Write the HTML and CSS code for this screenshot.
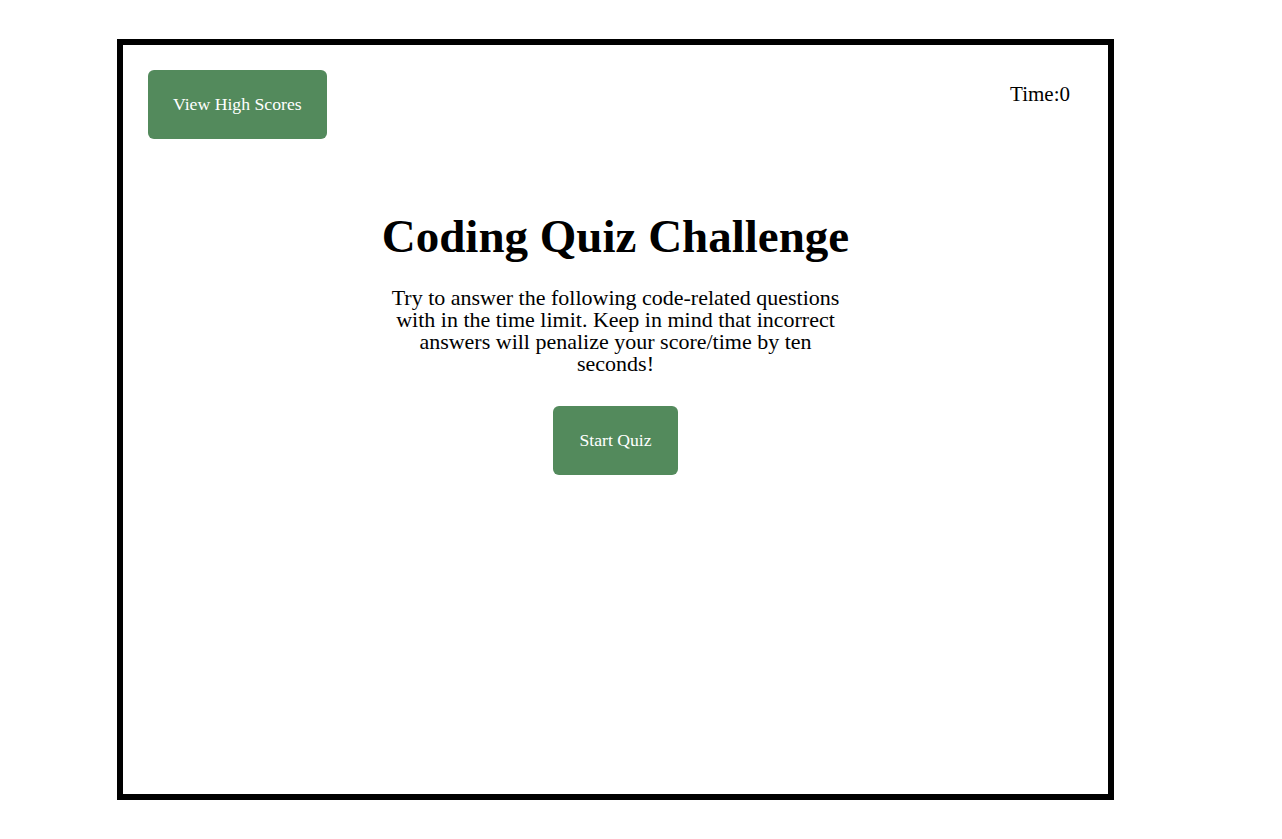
FILE: index.html
```html
<!DOCTYPE html>
<html lang="en">
<head>
<meta charset="utf-8">
<title>Coding Quiz Challenge</title>
<link rel="stylesheet" href="styles.css">
</head>
<body>
<div class="frame">
  <header class="top">
    <button class="btn">View High Scores</button>
    <div class="timer">Time:0</div>
  </header>
  <main class="intro">
    <h1 class="title">Coding Quiz Challenge</h1>
    <p class="lead">Try to answer the following code-related questions with in the time limit. Keep in mind that incorrect answers will penalize your score/time by ten seconds!</p>
    <button class="btn btn-start">Start Quiz</button>
  </main>
</div>
</body>
</html>
```
FILE: styles.css
```css
html, body {
  margin: 0;
  padding: 0;
  background: #fff;
}
body {
  font-family: "Liberation Serif", "Times New Roman", serif;
  color: #000;
}
.frame {
  box-sizing: border-box;
  width: 997px;
  height: 761px;
  margin: 39px 0 0 117px;
  border: 6px solid #000;
  padding: 25px;
  display: flex;
  flex-direction: column;
}
.top {
  display: flex;
  justify-content: space-between;
  align-items: flex-start;
}
.btn {
  font-family: "Liberation Serif", "Times New Roman", serif;
  font-size: 17.7px;
  line-height: 19px;
  color: #fff;
  background: #538a5c;
  border: none;
  border-radius: 6px;
  padding: 25px 25px;
  cursor: pointer;
}
.timer {
  font-size: 21px;
  line-height: 24px;
  margin-top: 12px;
  margin-right: 13px;
}
.intro {
  display: flex;
  flex-direction: column;
  align-items: center;
  text-align: center;
}
.title {
  font-size: 47px;
  line-height: 54px;
  font-weight: bold;
  margin: 70px 0 0;
}
.lead {
  width: 458px;
  font-size: 22px;
  line-height: 22px;
  margin: 24px 0 0;
}
.btn-start {
  margin-top: 31px;
  padding: 25px 26px;
}
```
